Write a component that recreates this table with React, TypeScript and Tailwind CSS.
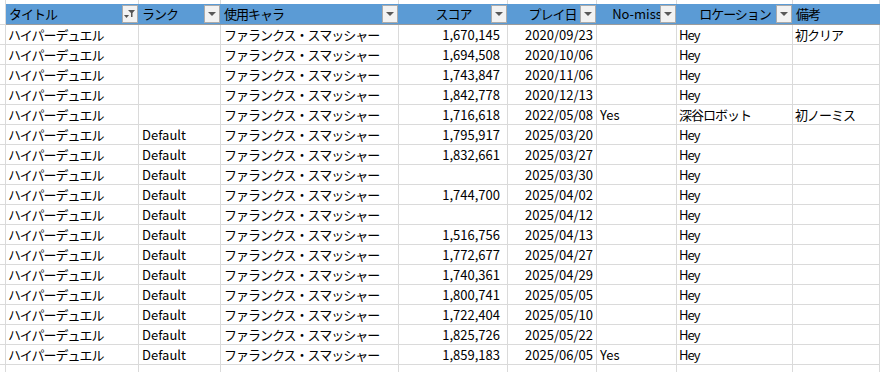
const ROWS: [string, string, string, string, string, string, string, string][] = [
  ["ハイパーデュエル", "", "ファランクス・スマッシャー", "1,670,145", "2020/09/23", "", "Hey", "初クリア"],
  ["ハイパーデュエル", "", "ファランクス・スマッシャー", "1,694,508", "2020/10/06", "", "Hey", ""],
  ["ハイパーデュエル", "", "ファランクス・スマッシャー", "1,743,847", "2020/11/06", "", "Hey", ""],
  ["ハイパーデュエル", "", "ファランクス・スマッシャー", "1,842,778", "2020/12/13", "", "Hey", ""],
  ["ハイパーデュエル", "", "ファランクス・スマッシャー", "1,716,618", "2022/05/08", "Yes", "深谷ロボット", "初ノーミス"],
  ["ハイパーデュエル", "Default", "ファランクス・スマッシャー", "1,795,917", "2025/03/20", "", "Hey", ""],
  ["ハイパーデュエル", "Default", "ファランクス・スマッシャー", "1,832,661", "2025/03/27", "", "Hey", ""],
  ["ハイパーデュエル", "Default", "ファランクス・スマッシャー", "", "2025/03/30", "", "Hey", ""],
  ["ハイパーデュエル", "Default", "ファランクス・スマッシャー", "1,744,700", "2025/04/02", "", "Hey", ""],
  ["ハイパーデュエル", "Default", "ファランクス・スマッシャー", "", "2025/04/12", "", "Hey", ""],
  ["ハイパーデュエル", "Default", "ファランクス・スマッシャー", "1,516,756", "2025/04/13", "", "Hey", ""],
  ["ハイパーデュエル", "Default", "ファランクス・スマッシャー", "1,772,677", "2025/04/27", "", "Hey", ""],
  ["ハイパーデュエル", "Default", "ファランクス・スマッシャー", "1,740,361", "2025/04/29", "", "Hey", ""],
  ["ハイパーデュエル", "Default", "ファランクス・スマッシャー", "1,800,741", "2025/05/05", "", "Hey", ""],
  ["ハイパーデュエル", "Default", "ファランクス・スマッシャー", "1,722,404", "2025/05/10", "", "Hey", ""],
  ["ハイパーデュエル", "Default", "ファランクス・スマッシャー", "1,825,726", "2025/05/22", "", "Hey", ""],
  ["ハイパーデュエル", "Default", "ファランクス・スマッシャー", "1,859,183", "2025/06/05", "Yes", "Hey", ""],
];

const HEADERS = [
  { label: "タイトル", align: "left", filtered: true },
  { label: "ランク", align: "left" },
  { label: "使用キャラ", align: "left" },
  { label: "スコア", align: "center" },
  { label: "プレイ日", align: "center" },
  { label: "No-miss", align: "center" },
  { label: "ロケーション", align: "center" },
  { label: "備考", align: "left", noButton: true },
];

const grid = "grid grid-cols-[6px_133px_82px_178px_109px_89px_80px_116px_1fr]";
const line = "border-r border-b border-[#dadada]";
const jp = "tracking-[-1px]";

function FilterButton({ filtered }: { filtered?: boolean }) {
  return (
    <div className="absolute z-10 right-[1px] top-[1px] w-[16px] h-[18px] border border-[#ababab] bg-[#f2f2f2] flex items-center justify-center">
      {filtered ? (
        <svg width="12" height="10" viewBox="0 0 12 10">
          <path d="M4 1h7L8.5 4v4H7V4z" fill="#555" />
          <path d="M0 6h5L2.5 9z" fill="#555" />
        </svg>
      ) : (
        <svg width="8" height="4" viewBox="0 0 8 4">
          <path d="M0 0h8L4 4z" fill="#595959" />
        </svg>
      )}
    </div>
  );
}

export default function App() {
  return (
    <div
      className="w-[880px] h-[372px] overflow-hidden bg-white text-[13px] text-black"
      style={{ fontFamily: '"Noto Sans CJK JP", "Noto Sans", sans-serif' }}
    >
      {/* strip above the table */}
      <div className={`${grid} h-[4px]`}>
        {Array.from({ length: 9 }).map((_, i) => (
          <div key={i} className="border-r border-[#dadada]" />
        ))}
      </div>

      <div className={`${grid} h-[21px]`}>
        <div className={line} />
        {HEADERS.map((h, i) => (
          <div
            key={i}
            className={`relative bg-[#5b9bd5] border-b border-[#9c9c9c] h-[21px] leading-[20px] whitespace-nowrap overflow-hidden ${
              h.align === "center" ? "text-center" : "text-left pl-[3px]"
            }`}
          >
            <span className={h.label === "No-miss" ? "" : jp}>{h.label}</span>
            {!h.noButton && <FilterButton filtered={h.filtered} />}
          </div>
        ))}
      </div>

      {ROWS.map((r, ri) => (
        <div key={ri} className={`${grid} h-[20px]`}>
          <div className={line} />
          <div className={`${line} pl-[2px] leading-[19px] whitespace-nowrap overflow-hidden ${jp}`}>{r[0]}</div>
          <div className={`${line} pl-[3px] leading-[19px] whitespace-nowrap`}>{r[1]}</div>
          <div className={`${line} pl-[3px] leading-[19px] whitespace-nowrap overflow-hidden ${jp}`}>{r[2]}</div>
          <div className={`${line} pr-[7px] text-right leading-[19px] whitespace-nowrap`}>{r[3]}</div>
          <div className={`${line} pr-[3px] text-right leading-[19px] whitespace-nowrap`}>{r[4]}</div>
          <div className={`${line} pl-[3px] leading-[19px] whitespace-nowrap`}>{r[5]}</div>
          <div className={`${line} pl-[2px] leading-[19px] whitespace-nowrap ${jp}`}>{r[6]}</div>
          <div className={`${line} pl-[2px] leading-[19px] whitespace-nowrap ${jp}`}>{r[7]}</div>
        </div>
      ))}

      <div className={`${grid} h-[20px]`}>
        {Array.from({ length: 9 }).map((_, i) => (
          <div key={i} className={line} />
        ))}
      </div>
    </div>
  );
}
